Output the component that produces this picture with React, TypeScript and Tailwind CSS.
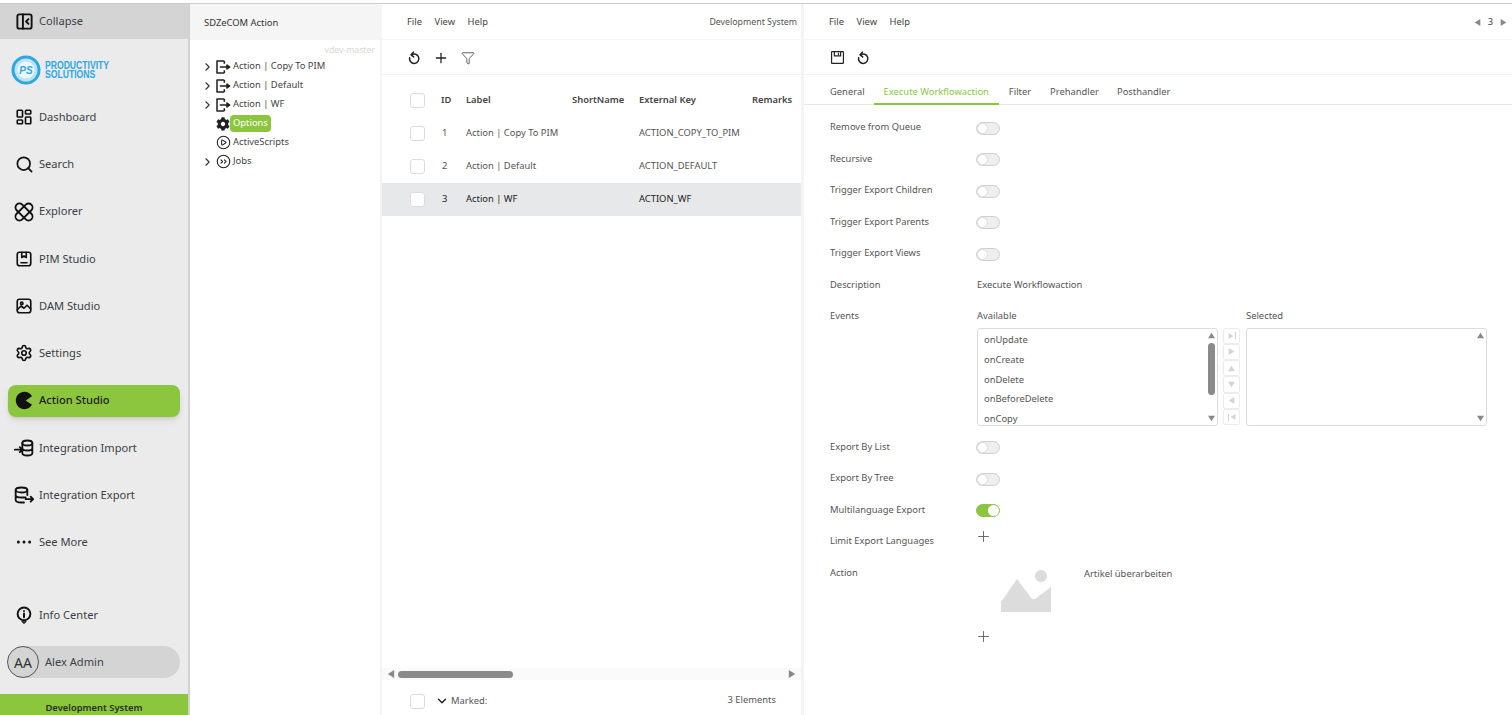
import { ChevronDown, ChevronRight, CirclePlay, Funnel, LayoutDashboard, Plus, Search, Settings } from "lucide-react";
import { FaCog } from "react-icons/fa";
import type { ReactNode } from "react";

const font = { fontFamily: '"Noto Sans", sans-serif' };

const Svg = ({ children, size = 18, className = "" }: { children: ReactNode; size?: number; className?: string }) => (
  <svg width={size} height={size} viewBox="0 0 24 24" fill="none" stroke="currentColor" strokeWidth="2.2" strokeLinecap="round" strokeLinejoin="round" className={className}>
    {children}
  </svg>
);

const CollapseIcon = () => (
  <Svg size={19} className="stroke-[2.4]">
    <rect x="3" y="3" width="18" height="18" rx="2.5" />
    <path d="M10 3v18M17 9l-3 3 3 3" />
  </Svg>
);
const ExplorerIcon = () => (
  <Svg size={20}>
    <rect x="7.25" y="-0.5" width="9.5" height="25" rx="4.75" transform="rotate(45 12 12)" />
    <rect x="7.25" y="-0.5" width="9.5" height="25" rx="4.75" transform="rotate(-45 12 12)" />
  </Svg>
);
const PimIcon = () => (
  <Svg>
    <rect x="3" y="3" width="18" height="18" rx="3" />
    <path d="M9 3v7l3-2 3 2V3M8 17h8" />
  </Svg>
);
const DamIcon = () => (
  <Svg>
    <rect x="3" y="3" width="18" height="18" rx="3" />
    <circle cx="9" cy="8.5" r="1.6" />
    <path d="M3 17l5-5 4 3 4-4 5 5" />
  </Svg>
);
const PacmanIcon = () => (
  <svg width="19" height="19" viewBox="0 0 24 24" fill="currentColor">
    <path d="M13.5 12 L21.5 6.5 C19.5 3 16 1 12 1 C6 1 1 6 1 12 C1 18 6 23 12 23 C16 23 19.5 21 21.5 17.5 Z" />
  </svg>
);
const ImportIcon = () => (
  <Svg size={20}>
    <ellipse cx="16" cy="6" rx="6" ry="3" />
    <path d="M10 6v12c0 1.7 2.7 3 6 3s6-1.3 6-3V6M10 12c0 1.7 2.7 3 6 3s6-1.3 6-3M1 14h9M7 11l3 3-3 3" />
  </Svg>
);
const ExportIcon = () => (
  <Svg size={20}>
    <ellipse cx="9" cy="6" rx="7" ry="3" />
    <path d="M2 6v12c0 1.7 3 3 7 3h3M16 6v6M2 12c0 1.7 3 3 7 3h5M14 17h9M20 14l3 3-3 3" />
  </Svg>
);
const DotsIcon = () => (
  <svg width="18" height="18" viewBox="0 0 24 24" fill="currentColor">
    <circle cx="4.5" cy="12" r="2" />
    <circle cx="12" cy="12" r="2" />
    <circle cx="19.5" cy="12" r="2" />
  </svg>
);
const InfoPinIcon = () => (
  <svg width="18" height="18" viewBox="0 0 24 24" fill="none" stroke="currentColor" strokeWidth="2.6" strokeLinecap="round">
    <circle cx="12" cy="10.5" r="8.5" />
    <path d="M12 10v5M12 6.5v.2" />
    <path d="M9 20.5l3 3 3-3z" fill="currentColor" strokeWidth="1" />
  </svg>
);
const EntryIcon = () => (
  <Svg size={16} className="stroke-[2.3]">
    <path d="M14 21H3V3h11M14 3v4M14 17v4" strokeLinecap="butt" />
    <path d="M8 12h14M18 9l4 3-4 3z" fill="currentColor" />
  </Svg>
);
const JobsIcon = () => (
  <Svg size={15} className="stroke-[1.8]">
    <circle cx="12" cy="12" r="10" />
    <path d="M8 9.5l2.5 2.5L8 14.5M13.5 9.5l2.5 2.5-2.5 2.5" />
  </Svg>
);
const UndoIcon = () => (
  <Svg size={14} className="stroke-[2.6]">
    <path d="M8 6.5a8 8 0 1 1-3.5 5" />
    <path d="M11 2L7 6.5l4.5 3.5" />
  </Svg>
);
const SaveIcon = () => (
  <Svg size={15} className="stroke-[1.9]">
    <rect x="2.5" y="2.5" width="19" height="19" rx="1" />
    <path d="M7 2.5v7h10v-7M13.5 5v2" />
  </Svg>
);

const Tri = ({ dir, className = "text-[#888]", size = 8 }: { dir: "up" | "down" | "left" | "right"; className?: string; size?: number }) => {
  const points = { up: "5,1 10,9 0,9", down: "0,1 10,1 5,9", left: "9,0 9,10 1,5", right: "1,0 1,10 9,5" }[dir];
  return (
    <svg width={size} height={size} viewBox="0 0 10 10" fill="currentColor" className={className}>
      <polygon points={points} />
    </svg>
  );
};

const Logo = () => (
  <div className="h-[54.5px] pt-[7px] flex items-center pl-[11px] gap-[4px]">
    <svg width="30" height="30" viewBox="0 0 30 30">
      <circle cx="15" cy="15" r="14.5" fill="#2ba7e6" />
      <circle cx="15" cy="15" r="11.5" fill="#bfe4f7" />
      <circle cx="15" cy="15" r="8.5" fill="#eef8fd" />
      <text x="15" y="18.6" textAnchor="middle" fontSize="10" fontWeight="700" fontStyle="italic" fill="#2ba7e6" fontFamily="Liberation Sans">PS</text>
    </svg>
    <div className="flex flex-col text-[#2ba7e6] font-bold text-[10px] leading-[9px] scale-x-[0.86] origin-left" style={{ fontFamily: '"Liberation Sans", sans-serif' }}>
      <span>PRODUCTIVITY</span>
      <span>SOLUTIONS</span>
    </div>
  </div>
);

const NavItem = ({ icon, label, active }: { icon: ReactNode; label: string; active?: boolean }) => (
  <div className="h-[47.25px] px-2 flex items-center">
    <div className={`w-[172px] h-8 flex items-center rounded-lg ${active ? "bg-[#8cc63f] shadow-md text-[#1c1c1c] font-medium" : "text-[#3a3f45]"}`}>
      <span className="w-[31px] flex justify-center pl-[1px] text-[#111]">{icon}</span>
      <span className="text-[11.1px]">{label}</span>
    </div>
  </div>
);

const Sidebar = () => (
  <aside className="w-[190px] shrink-0 bg-[#ebebeb] border-r-2 border-[#d2d2d2] flex flex-col">
    <div className="h-[35px] bg-[#d4d4d4] flex items-center text-[#3a3f45] pl-2">
      <span className="w-[31px] flex justify-center pl-[1px] text-[#111]"><CollapseIcon /></span>
      <span className="text-[11.1px]">Collapse</span>
    </div>
    <Logo />
    <NavItem icon={<LayoutDashboard size={18} strokeWidth={2.2} />} label="Dashboard" />
    <NavItem icon={<Search size={19} strokeWidth={2.2} />} label="Search" />
    <NavItem icon={<ExplorerIcon />} label="Explorer" />
    <NavItem icon={<PimIcon />} label="PIM Studio" />
    <NavItem icon={<DamIcon />} label="DAM Studio" />
    <NavItem icon={<Settings size={18} strokeWidth={2.2} />} label="Settings" />
    <NavItem icon={<PacmanIcon />} label="Action Studio" active />
    <NavItem icon={<ImportIcon />} label="Integration Import" />
    <NavItem icon={<ExportIcon />} label="Integration Export" />
    <NavItem icon={<DotsIcon />} label="See More" />
    <div className="flex-1" />
    <NavItem icon={<InfoPinIcon />} label="Info Center" />
    <div className="px-2 mt-[7px]">
      <div className="h-8 w-[172px] rounded-full bg-[#d4d4d4] flex items-center text-[#3a3f45]">
        <span className="w-8 h-8 -ml-[1px] rounded-full border border-[#555] flex items-center justify-center text-[14px] text-[#333]">AA</span>
        <span className="text-[11.1px] ml-[6px]">Alex Admin</span>
      </div>
    </div>
    <div className="h-[21px] mt-4 pt-[7px] bg-[#8cc63f] flex items-center justify-center text-[9.4px] font-semibold text-[#26301a]">
      Development System
    </div>
  </aside>
);

const TreeRow = ({ icon, label, expand = true, selected }: { icon: ReactNode; label: string; expand?: boolean; selected?: boolean }) => (
  <div className="h-[19px] flex items-center pl-[11px]">
    <span className="w-[13px] flex justify-center text-[#333]">{expand && <ChevronRight size={14} strokeWidth={2} />}</span>
    <span className="w-[16px] flex justify-center ml-[1px] text-[#222]">{icon}</span>
    {selected ? (
      <span className="-ml-[1px] px-[3px] h-[17px] flex items-center rounded-sm bg-[#8cc63f] text-white text-[9.4px]">{label}</span>
    ) : (
      <span className="ml-[2px] text-[9.4px] text-[#444]">{label}</span>
    )}
  </div>
);

const TreePanel = () => (
  <section className="w-[190px] shrink-0 bg-white flex flex-col">
    <div className="h-9 pt-[2px] bg-[#f5f5f5] flex items-center pl-[14px] text-[9.4px] text-[#333]">SDZeCOM Action</div>
    <div className="h-[17px] flex items-end justify-end pr-[5px] text-[8.7px] text-[#d8d8d8]">vdev-master</div>
    <div>
      <TreeRow icon={<EntryIcon />} label="Action | Copy To PIM" />
      <TreeRow icon={<EntryIcon />} label="Action | Default" />
      <TreeRow icon={<EntryIcon />} label="Action | WF" />
      <TreeRow icon={<FaCog size={14} />} label="Options" expand={false} selected />
      <TreeRow icon={<CirclePlay size={15} strokeWidth={1.7} />} label="ActiveScripts" expand={false} />
      <TreeRow icon={<JobsIcon />} label="Jobs" />
    </div>
  </section>
);

const Menu = () => (
  <div className="flex gap-[12.5px] text-[9.4px] text-[#444]">
    <span>File</span>
    <span>View</span>
    <span>Help</span>
  </div>
);

const Checkbox = () => <span className="block w-[15px] h-[15px] rounded-[3px] border border-[#dcdcdc] bg-white" />;

const gridCols = "grid grid-cols-[59px_25px_106px_67px_113px_1fr] items-center";

const rows = [
  { id: 1, label: "Action | Copy To PIM", key: "ACTION_COPY_TO_PIM" },
  { id: 2, label: "Action | Default", key: "ACTION_DEFAULT" },
  { id: 3, label: "Action | WF", key: "ACTION_WF", selected: true },
];

const ListPanel = () => (
  <section className="w-[419px] shrink-0 ml-[2px] bg-white flex flex-col">
    <div className="h-9 pt-[2px] flex items-center justify-between pl-[25px] pr-[4px] border-b border-[#f6f6f6]">
      <Menu />
      <span className="text-[8.8px] text-[#555]">Development System</span>
    </div>
    <div className="h-[35px] pt-[1px] flex items-center gap-[12px] pl-[25px] border-b border-[#f3f3f3] text-[#222]">
      <UndoIcon />
      <Plus size={16} strokeWidth={1.9} />
      <Funnel size={14} strokeWidth={1.2} />
    </div>
    <div className={`${gridCols} h-[33px] mt-[9px] text-[9.4px] font-semibold text-[#444]`}>
      <span className="pl-[28px]"><Checkbox /></span>
      <span>ID</span>
      <span>Label</span>
      <span>ShortName</span>
      <span>External Key</span>
      <span>Remarks</span>
    </div>
    {rows.map((r) => (
      <div key={r.id} className={`${gridCols} h-[33px] text-[9.4px] ${r.selected ? "bg-[#e7e8ea] text-[#222]" : "text-[#555]"}`}>
        <span className="pl-[28px]"><Checkbox /></span>
        <span className="pl-[1px]">{r.id}</span>
        <span className="whitespace-nowrap">{r.label}</span>
        <span />
        <span className="whitespace-nowrap">{r.key}</span>
        <span />
      </div>
    ))}
    <div className="flex-1" />
    <div className="h-3 bg-[#fafafa] flex items-center px-[5px] gap-[3px]">
      <Tri dir="left" />
      <div className="w-[115px] h-[7px] rounded-full bg-[#8a8a8a]" />
      <div className="flex-1" />
      <Tri dir="right" />
    </div>
    <div className="h-[35px] pt-[7px] flex items-center pl-[28px] pr-[25px] text-[9.4px] text-[#555]">
      <Checkbox />
      <ChevronDown size={14} strokeWidth={2.4} className="ml-[10px] text-[#222]" />
      <span className="ml-[2px] mt-[1px]">Marked:</span>
      <span className="ml-auto -mt-[2px]">3 Elements</span>
    </div>
  </section>
);

const Toggle = ({ on }: { on?: boolean }) => (
  <span className={`w-6 h-[13px] mt-[2px] -ml-[1px] rounded-full border flex items-center ${on ? "bg-[#8cc63f] border-[#8cc63f] justify-end" : "bg-[#eeeeee] border-[#cfcfcf] justify-start"}`}>
    <span className={`w-[11px] h-[11px] rounded-full bg-white ${on ? "" : "border border-[#dddddd]"}`} />
  </span>
);

const FormRow = ({ label, children, tall }: { label: string; children?: ReactNode; tall?: boolean }) => (
  <div className={`flex ${tall ? "items-start" : "items-center h-[31.5px]"} text-[9.4px] text-[#555]`}>
    <span className={`w-[147px] shrink-0 ${tall ? "pt-[8px] leading-[14px]" : ""}`}>{label}</span>
    {children}
  </div>
);

const ScrollBar = ({ thumb }: { thumb?: boolean }) => (
  <div className="w-[12px] shrink-0 flex flex-col items-center py-[3px]">
    <Tri dir="up" size={7} />
    {thumb && <div className="w-[7px] h-[52px] mt-[4px] rounded-full bg-[#8a8a8a]" />}
    <div className="flex-1" />
    <Tri dir="down" size={7} />
  </div>
);

const transferIcons: ReactNode[] = [
  <span key="a" className="flex items-center gap-[1px]"><Tri dir="right" size={6} className="text-[#d4d4d4]" /><span className="w-[1px] h-[7px] bg-[#d4d4d4]" /></span>,
  <Tri key="b" dir="right" size={7} className="text-[#d4d4d4]" />,
  <Tri key="c" dir="up" size={7} className="text-[#d4d4d4]" />,
  <Tri key="d" dir="down" size={7} className="text-[#d4d4d4]" />,
  <Tri key="e" dir="left" size={7} className="text-[#d4d4d4]" />,
  <span key="f" className="flex items-center gap-[1px]"><span className="w-[1px] h-[7px] bg-[#d4d4d4]" /><Tri dir="left" size={6} className="text-[#d4d4d4]" /></span>,
];

const events = ["onUpdate", "onCreate", "onDelete", "onBeforeDelete", "onCopy"];

const EventsPicker = () => (
  <div className="flex flex-col">
    <div className="flex h-[27px] pt-[4px] items-center">
      <span className="w-[269px]">Available</span>
      <span>Selected</span>
    </div>
    <div className="flex h-[98px]">
      <div className="w-[241px] rounded-[3px] border border-[#dcdcdc] flex overflow-hidden">
        <ul className="flex-1 pl-[6px] pt-[2px]">
          {events.map((e) => (
            <li key={e} className="h-[19.7px] flex items-center text-[#555]">{e}</li>
          ))}
        </ul>
        <ScrollBar thumb />
      </div>
      <div className="w-[17px] ml-[5px] flex flex-col">
        {transferIcons.map((icon, i) => (
          <span key={i} className="h-[16.4px] border border-[#ececec] rounded-[2px] flex items-center justify-center">{icon}</span>
        ))}
      </div>
      <div className="w-[241px] ml-[6px] rounded-[3px] border border-[#dcdcdc] flex">
        <div className="flex-1" />
        <ScrollBar />
      </div>
    </div>
  </div>
);

const DetailPanel = () => (
  <section className="flex-1 ml-[3px] bg-white flex flex-col min-w-0">
    <div className="h-9 pt-[2px] flex items-center justify-between pl-[25px] pr-[5px] border-b border-[#f6f6f6]">
      <Menu />
      <div className="flex items-center gap-[7px] text-[9.4px] text-[#444]">
        <Tri dir="left" size={7} />
        <span>3</span>
        <Tri dir="right" size={7} />
      </div>
    </div>
    <div className="h-[35px] pt-[1px] flex items-center gap-[11px] pl-[26px] border-b border-[#f3f3f3] text-[#222]">
      <SaveIcon />
      <UndoIcon />
    </div>
    <div className="h-[30px] flex pl-[16px] border-b border-[#e8e8e8] text-[9.4px] text-[#555]">
      <span className="pl-[10px] pr-[9px] pt-[6px] flex items-center">General</span>
      <span className="px-[10px] pt-[6px] flex items-center text-[#8cc63f] border-b-2 border-[#8cc63f] h-[30px]">Execute Workflowaction</span>
      <span className="px-[10px] pt-[6px] flex items-center">Filter</span>
      <span className="px-[9px] pt-[6px] flex items-center">Prehandler</span>
      <span className="px-[9px] pt-[6px] flex items-center">Posthandler</span>
    </div>
    <div className="pl-[26px] pt-[6.5px] flex flex-col">
      <FormRow label="Remove from Queue"><Toggle /></FormRow>
      <FormRow label="Recursive"><Toggle /></FormRow>
      <FormRow label="Trigger Export Children"><Toggle /></FormRow>
      <FormRow label="Trigger Export Parents"><Toggle /></FormRow>
      <FormRow label="Trigger Export Views"><Toggle /></FormRow>
      <FormRow label="Description"><span>Execute Workflowaction</span></FormRow>
      <div className="h-[130.5px]">
        <FormRow label="Events" tall><EventsPicker /></FormRow>
      </div>
      <FormRow label="Export By List"><Toggle /></FormRow>
      <FormRow label="Export By Tree"><Toggle /></FormRow>
      <FormRow label="Multilanguage Export"><Toggle on /></FormRow>
      <FormRow label="Limit Export Languages">
        <Plus size={17} strokeWidth={1.2} className="-mt-[10px] -ml-[2px] text-[#555]" />
      </FormRow>
      <div className="flex text-[9.4px] text-[#555] mt-[9px]">
        <span className="w-[147px] shrink-0 leading-[14px]">Action</span>
        <div className="flex flex-col">
          <div className="flex">
            <svg width="52" height="44" viewBox="0 0 52 44" className="ml-[24px] mt-[4px]">
              <path d="M0 42V32L16 9 31 29 34 29 50 17V42Z" fill="#dcdcdc" />
              <circle cx="40" cy="6" r="6" fill="#dcdcdc" />
            </svg>
            <span className="ml-[31px] leading-[14px] pt-[1px]">Artikel überarbeiten</span>
          </div>
          <Plus size={17} strokeWidth={1.2} className="mt-[14px] -ml-[2px] text-[#555]" />
        </div>
      </div>
    </div>
  </section>
);

export default function App() {
  return (
    <div className="w-[1512px] h-[715px] overflow-hidden bg-white flex flex-col" style={font}>
      <div className="h-[3px] bg-white" />
      <div className="h-[1px] bg-[#cccccc]" />
      <div className="flex-1 min-h-0 flex bg-[#f4f4f4]">
        <Sidebar />
        <TreePanel />
        <ListPanel />
        <DetailPanel />
      </div>
    </div>
  );
}
